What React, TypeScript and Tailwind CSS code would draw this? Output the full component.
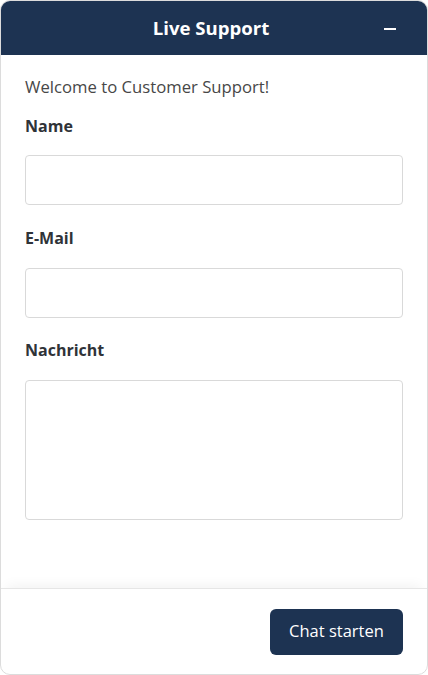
import React from "react";

export default function App() {
  return (
    <div className="w-[428px] h-[675px] bg-white" style={{ fontFamily: '"Open Sans", "Noto Sans", sans-serif' }}>
      <div className="w-full h-full flex flex-col rounded-[10px] border border-[#dcdcdc] overflow-hidden bg-white">
        <div className="h-[54px] shrink-0 bg-[#1d3352] flex items-center justify-center relative pr-[6px]">
          <span className="text-white font-bold text-[18.6px] leading-none">Live Support</span>
          <span className="absolute right-[31px] top-[27px] w-[12px] h-[2px] bg-white" />
        </div>
        <div className="flex-1 px-[24px] pt-[20px] flex flex-col">
          <p className="text-[16.7px] leading-[24px] text-[#474747]">Welcome to Customer Support!</p>
          <label className="mt-[15px] text-[16px] leading-[24px] font-bold text-[#2f3338]">Name</label>
          <input className="mt-[17px] h-[50px] w-full border border-[#d9d9d9] rounded-[4px] outline-none" />
          <label className="mt-[21px] text-[16px] leading-[24px] font-bold text-[#2f3338]">E-Mail</label>
          <input className="mt-[18px] h-[50px] w-full border border-[#d9d9d9] rounded-[4px] outline-none" />
          <label className="mt-[20px] text-[16px] leading-[24px] font-bold text-[#2f3338]">Nachricht</label>
          <textarea className="mt-[18px] h-[140px] w-full border border-[#d9d9d9] rounded-[4px] outline-none resize-none" />
        </div>
        <div className="h-[86px] shrink-0 border-t border-[#e6e6e6] shadow-[0_-8px_12px_-6px_rgba(0,0,0,0.06)] flex items-center justify-end pr-[24px]">
          <button className="h-[46px] w-[133px] rounded-[6px] bg-[#1d3352] text-white text-[16.5px]">Chat starten</button>
        </div>
      </div>
    </div>
  );
}
